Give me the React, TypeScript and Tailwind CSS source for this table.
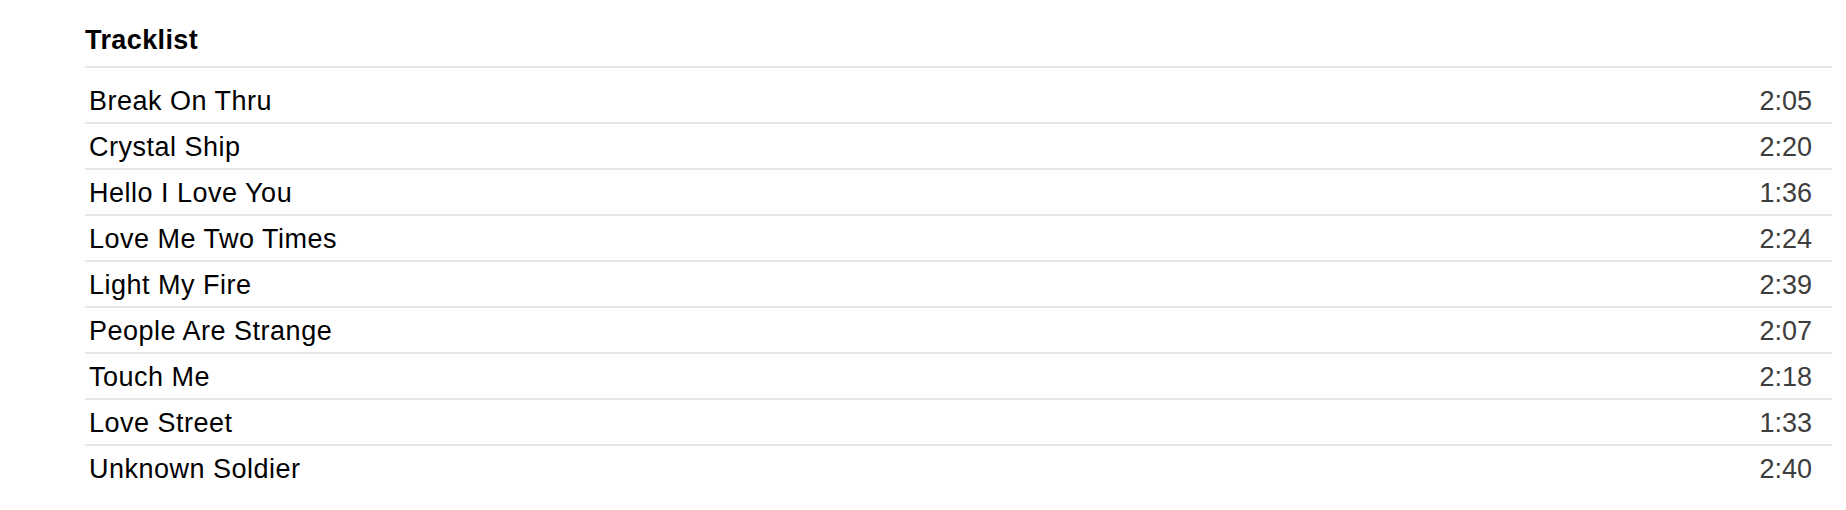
const TRACKS = [
  { title: 'Break On Thru', length: '2:05' },
  { title: 'Crystal Ship', length: '2:20' },
  { title: 'Hello I Love You', length: '1:36' },
  { title: 'Love Me Two Times', length: '2:24' },
  { title: 'Light My Fire', length: '2:39' },
  { title: 'People Are Strange', length: '2:07' },
  { title: 'Touch Me', length: '2:18' },
  { title: 'Love Street', length: '1:33' },
  { title: 'Unknown Soldier', length: '2:40' },
]

export default function App() {
  return (
    <div className="w-full h-[510px] bg-white pl-[85px] pr-[14px] font-['Liberation_Sans',Arial,sans-serif] text-black">
      <h2 className="pt-[23px] pb-[9px] text-[27px] leading-[34px] font-bold tracking-[0.4px] border-b-2 border-[#e6e6e6]">
        Tracklist
      </h2>

      <ul className="pt-[10px]">
        {TRACKS.map((track, i) => (
          <li
            key={track.title}
            className={`flex items-start justify-between pt-[3px] pb-[1px] pl-[4px] pr-[20px] text-[27px] leading-[40px] ${
              i < TRACKS.length - 1 ? 'border-b-2 border-[#e6e6e6]' : ''
            }`}
          >
            <span className="tracking-[0.5px]">{track.title}</span>
            <span className="text-[#3d3d3d]">{track.length}</span>
          </li>
        ))}
      </ul>
    </div>
  )
}
